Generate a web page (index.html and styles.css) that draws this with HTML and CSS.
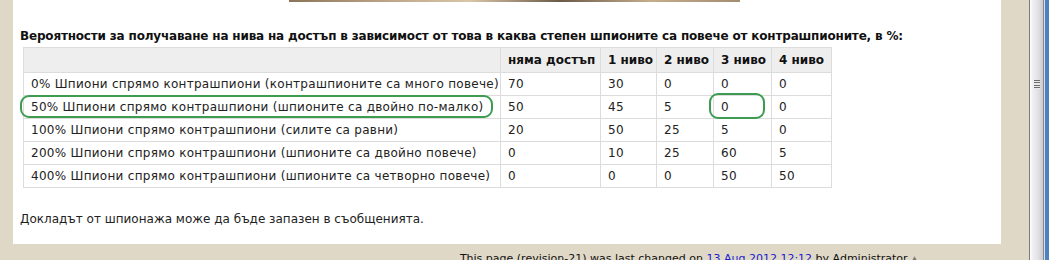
FILE: index.html
```html
<!DOCTYPE html>
<html>
<head>
<meta charset="utf-8">
<link rel="stylesheet" href="styles.css">
</head>
<body>
<div class="window">
  <div class="page">
    <div class="panel">
      <div class="picture-edge"></div>
      <h3 class="title">Вероятности за получаване на нива на достъп в зависимост от това в каква степен шпионите са повече от контрашпионите, в %:</h3>
      <table class="odds">
        <colgroup>
          <col class="c-name"><col class="c-none"><col class="c-l1"><col class="c-l2"><col class="c-l3"><col class="c-l4">
        </colgroup>
        <thead>
          <tr><th></th><th>няма достъп</th><th>1 ниво</th><th>2 ниво</th><th>3 ниво</th><th>4 ниво</th></tr>
        </thead>
        <tbody>
          <tr><td>0% Шпиони спрямо контрашпиони (контрашпионите са много повече)</td><td>70</td><td>30</td><td>0</td><td>0</td><td>0</td></tr>
          <tr><td>50% Шпиони спрямо контрашпиони (шпионите са двойно по-малко)</td><td>50</td><td>45</td><td>5</td><td>0</td><td>0</td></tr>
          <tr><td>100% Шпиони спрямо контрашпиони (силите са равни)</td><td>20</td><td>50</td><td>25</td><td>5</td><td>0</td></tr>
          <tr><td>200% Шпиони спрямо контрашпиони (шпионите са двойно повече)</td><td>0</td><td>10</td><td>25</td><td>60</td><td>5</td></tr>
          <tr><td>400% Шпиони спрямо контрашпиони (шпионите са четворно повече)</td><td>0</td><td>0</td><td>0</td><td>50</td><td>50</td></tr>
        </tbody>
      </table>
      <p class="note">Докладът от шпионажа може да бъде запазен в съобщенията.</p>
      <div class="mark mark-row"></div>
      <div class="mark mark-cell"></div>
    </div>
    <div class="footer">This page (revision-21) was last changed on <a href="#">13 Aug 2012 12:12</a> by Administrator <span class="up">▲</span></div>
  </div>
  <div class="scrollbar"><div class="thumb"><div class="grip"></div></div><div class="frame"></div></div>
</div>
</body>
</html>
```

FILE: styles.css
```css
html, body {
  margin: 0;
  padding: 0;
  background: #dfd8c6;
  font-family: "DejaVu Sans", Verdana, sans-serif;
  color: #111;
  overflow: hidden;
}
.window {
  display: flex;
  height: 260px;
}
.page {
  flex: 1;
  padding-left: 13px;
  padding-right: 28px;
}
.panel {
  position: relative;
  background: #fff;
  height: 244px;
  padding: 0 7px;
  box-sizing: border-box;
}
.picture-edge {
  margin-left: 269px;
  width: 451px;
  height: 2px;
  background: linear-gradient(90deg, #8a7458, #b9a283 20%, #d8c6a8 40%, #6b5a48 60%, #c4ad8c 80%, #a38d70);
}
.title {
  margin: 0;
  padding-top: 26px;
  font-size: 12px;
  line-height: 16px;
  font-weight: bold;
  letter-spacing: -0.18px;
  color: #111;
  white-space: nowrap;
}
.odds {
  margin: 3px 0 0 3px;
  border-collapse: collapse;
  table-layout: fixed;
  width: 808px;
  font-size: 12px;
  line-height: 16px;
}
.c-name { width: 477px; }
.c-none { width: 100px; }
.c-l1 { width: 56px; }
.c-l2 { width: 57px; }
.c-l3 { width: 58px; }
.c-l4 { width: 60px; }
.odds th, .odds td {
  border: 1px solid #dcdcdc;
  padding: 3px 7px;
  text-align: left;
  white-space: nowrap;
  color: #222;
}
.odds td {
  letter-spacing: 0.28px;
}
.odds th {
  background: #eeeeee;
  padding: 4px 7px;
  font-weight: bold;
  color: #111;
}
.note {
  margin: 23px 0 0;
  font-size: 12px;
  line-height: 16px;
  color: #222;
}
.mark {
  position: absolute;
  border: 2px solid #3d9c4f;
  border-radius: 9px;
  box-sizing: border-box;
}
.mark-row {
  left: 7px;
  top: 95px;
  width: 473px;
  height: 23px;
}
.mark-cell {
  left: 696px;
  top: 93px;
  width: 56px;
  height: 26px;
}
.footer {
  text-align: right;
  padding: 8px 83px 0 0;
  font-size: 11px;
  line-height: 14px;
  color: #111;
  white-space: nowrap;
}
.footer a {
  color: #1a1ad0;
  text-decoration: none;
}
.up {
  font-size: 9px;
  color: #777;
}
.scrollbar {
  width: 20px;
  display: flex;
  background: #f2f2f2;
}
.thumb {
  width: 15px;
  box-sizing: border-box;
  border-left: 1px solid #7b7b7b;
  border-right: 1px solid #8a8a8a;
  background: linear-gradient(90deg, #ffffff 0, #f0f0f2 20%, #e2e2e6 60%, #c9c9d0 100%);
  display: flex;
  align-items: flex-start;
  justify-content: center;
}
.grip {
  margin-top: 80px;
  width: 6px;
  height: 9px;
  background: repeating-linear-gradient(180deg, #6c6c6c 0 1px, #e8e8e8 1px 2.5px);
}
.frame {
  flex: 1;
  background: linear-gradient(90deg, #d8dde6 0 1px, #4f80c0 1px);
}
```
